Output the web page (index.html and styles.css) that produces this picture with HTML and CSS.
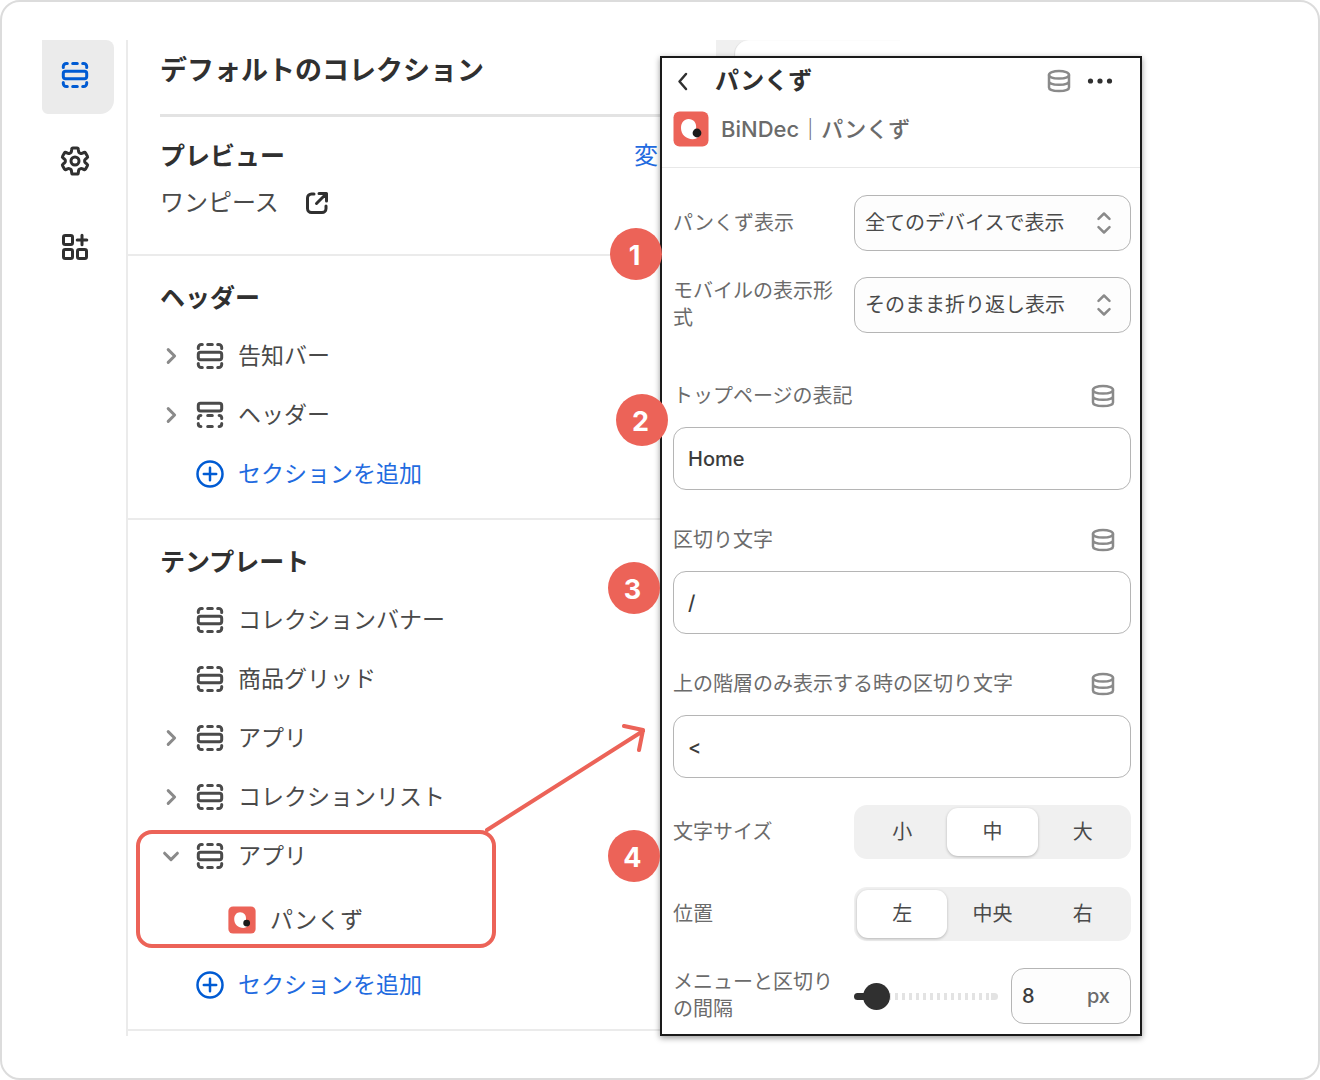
FILE: index.html
```html
<!DOCTYPE html>
<html lang="ja">
<head>
    <meta charset="UTF-8">
    <meta name="viewport" content="width=device-width, initial-scale=1.0">
    <title>パンくず</title>
    <link rel="stylesheet" href="styles.css">
</head>
<body>
    <!-- shared icons -->
    <svg class="sprite" aria-hidden="true">
        <symbol id="icon-section" viewBox="0 0 28 28">
            <rect x="2.3" y="10.2" width="23.4" height="7.6" rx="2.2"/>
            <path d="M2.3 6.6V5.4a3 3 0 0 1 3-3h1M11.7 2.4h4.6M21.700 2.4h1a3 3 0 0 1 3 3v1.2M2.3 21.4v1.2a3 3 0 0 0 3 3h1M11.7 25.6h4.6M21.700 25.6h1a3 3 0 0 0 3-3v-1.2"/>
        </symbol>
        <symbol id="icon-header" viewBox="0 0 28 28">
            <rect x="2.3" y="2.3" width="23.4" height="7.6" rx="2.2"/>
            <path d="M2.3 17.4v-.8a2.6 2.6 0 0 1 2.6-2.2M11.7 14.400h4.6M23.1 14.400a2.6 2.6 0 0 1 2.6 2.2v.8M2.3 22.400v.6a2.6 2.6 0 0 0 2.6 2.6M11.7 25.6h4.6M25.7 22.400v.6a2.6 2.6 0 0 1-2.6 2.6"/>
        </symbol>
        <symbol id="icon-chevron" viewBox="0 0 22 22">
            <path d="M8.2 4.6l6.4 6.4-6.4 6.4"/>
        </symbol>
        <symbol id="icon-add" viewBox="0 0 28 28">
            <circle cx="14" cy="14" r="12.5"/>
            <path d="M14 7.8v12.4M7.8 14h12.4"/>
        </symbol>
        <symbol id="icon-data" viewBox="0 0 24 24">
            <path d="M2 6c0-2.200 4.300-4 10-4s10 1.800 10 4-4.300 3.500-10 3.500S2 8.200 2 6z"/>
            <path d="M2 6v12.500c0 2.200 4.300 3.500 10 3.500s10-1.300 10-3.500V6M2 12.300c0 2.200 4.300 3.500 10 3.500s10-1.300 10-3.500"/>
        </symbol>
        <symbol id="icon-updown" viewBox="0 0 16 24">
            <path d="M2.500 7.800L8 2.500l5.500 5.300M2.500 16.200L8 21.500l5.500-5.300"/>
        </symbol>
        <symbol id="icon-app" viewBox="0 0 36 36">
            <rect x="0.500" y="0.500" width="35" height="35" rx="6" fill="#ec6358"/>
            <path d="M15.500 8c5 0 8.300 3.700 7.600 9.300l1.700 9.200c-1.300 1-3 1.700-5 1.700C13 28.200 8 23.500 8 17c0-5.500 3.200-9 7.500-9z" fill="#fff"/>
            <circle cx="24" cy="22" r="4.400" fill="#1a1a1a"/>
        </symbol>
    </svg>

    <div class="frame">
        <nav class="rail">
            <button class="rail-button active" aria-label="セクション">
                <svg class="icon"><use href="#icon-section"/></svg>
            </button>
            <button class="rail-button" aria-label="設定">
                <svg class="icon gear" viewBox="0 0 30 30">
                    <path d="M13 2h4q1.200 0 1.300 1.200l.3 2.300q.1.900 1 1.400l.6.300q.9.500 1.700.2l2.100-.9q1-.4 1.600.6l1.800 3.100q.6 1-.3 1.700l-1.800 1.400q-.7.500-.7 1.700t.7 1.700l1.800 1.400q.9.700.3 1.700l-1.800 3.100q-.6 1-1.600.6l-2.100-.9q-.8-.3-1.700.2l-.6.300q-.9.500-1 1.400l-.3 2.300q-.1 1.200-1.300 1.200h-4q-1.200 0-1.300-1.200l-.3-2.300q-.1-.9-1-1.400l-.6-.3q-.9-.5-1.700-.2l-2.100.9q-1 .4-1.600-.6l-1.800-3.100q-.6-1 .3-1.700l1.800-1.400q.7-.5.7-1.700t-.7-1.700l-1.800-1.400q-.9-.7-.3-1.700l1.800-3.100q.6-1 1.600-.6l2.100.9q.8.300 1.700-.2l.6-.3q.9-.5 1-1.400l.3-2.300Q11.800 2 13 2z"/>
                    <circle cx="15" cy="15" r="4"/>
                </svg>
            </button>
            <button class="rail-button" aria-label="アプリ">
                <svg class="icon" viewBox="0 0 28 28">
                    <rect x="2.500" y="2.500" width="9" height="9" rx="1.800"/>
                    <rect x="2.500" y="16.500" width="9" height="9" rx="1.800"/>
                    <rect x="16.500" y="16.500" width="9" height="9" rx="1.800"/>
                    <path d="M21 2.200v9.600M16.200 7h9.600"/>
                </svg>
            </button>
        </nav>

        <main class="sidebar">
            <h1>デフォルトのコレクション</h1>

            <section class="preview">
                <div class="preview-head">
                    <h2>プレビュー</h2>
                    <a href="#">変</a>
                </div>
                <div class="preview-item">
                    ワンピース
                    <svg class="icon external" viewBox="0 0 24 24">
                        <path d="M9 3H6.500a4 4 0 0 0-4 4v10.500a4 4 0 0 0 4 4H17a4 4 0 0 0 4-4V15M14 2.500h7.500V10M21 3L11.500 12.500"/>
                    </svg>
                </div>
            </section>

            <section class="group">
                <h2>ヘッダー</h2>
                <ul>
                    <li><svg class="chevron"><use href="#icon-chevron"/></svg><svg class="icon"><use href="#icon-section"/></svg>告知バー</li>
                    <li><svg class="chevron"><use href="#icon-chevron"/></svg><svg class="icon"><use href="#icon-header"/></svg>ヘッダー</li>
                </ul>
                <button class="add"><svg class="icon"><use href="#icon-add"/></svg>セクションを追加</button>
            </section>

            <section class="group">
                <h2>テンプレート</h2>
                <ul>
                    <li><span class="chevron"></span><svg class="icon"><use href="#icon-section"/></svg>コレクションバナー</li>
                    <li><span class="chevron"></span><svg class="icon"><use href="#icon-section"/></svg>商品グリッド</li>
                    <li><svg class="chevron"><use href="#icon-chevron"/></svg><svg class="icon"><use href="#icon-section"/></svg>アプリ</li>
                    <li><svg class="chevron"><use href="#icon-chevron"/></svg><svg class="icon"><use href="#icon-section"/></svg>コレクションリスト</li>
                </ul>
                <div class="highlight">
                    <ul>
                        <li><svg class="chevron open"><use href="#icon-chevron"/></svg><svg class="icon"><use href="#icon-section"/></svg>アプリ</li>
                        <li class="child"><svg class="app-icon"><use href="#icon-app"/></svg>パンくず</li>
                    </ul>
                    <svg class="arrow" viewBox="0 0 160 110">
                        <path d="M2 106L158 7M139 2l19 4-4 20"/>
                    </svg>
                </div>
                <button class="add"><svg class="icon"><use href="#icon-add"/></svg>セクションを追加</button>
            </section>
        </main>

        <div class="stage">
            <div class="canvas"><div class="canvas-page"></div></div>

            <form class="panel">
                <header class="panel-header">
                    <div class="panel-title">
                        <button type="button" class="back" aria-label="戻る">
                            <svg viewBox="0 0 20 20"><path d="M13 3L6.500 10.500 13 18"/></svg>
                        </button>
                        <h2>パンくず</h2>
                        <svg class="data"><use href="#icon-data"/></svg>
                        <button type="button" class="more" aria-label="その他">
                            <svg viewBox="0 0 26 8"><circle cx="3.500" cy="4" r="2.600"/><circle cx="13" cy="4" r="2.600"/><circle cx="22.500" cy="4" r="2.600"/></svg>
                        </button>
                    </div>
                    <div class="panel-app">
                        <svg class="app-icon"><use href="#icon-app"/></svg>
                        BiNDec｜パンくず
                    </div>
                </header>

                <div class="rows">
                    <div class="row">
                        <label for="display">パンくず表示</label>
                        <div class="select">
                            <select id="display"><option>全てのデバイスで表示</option></select>
                            <svg><use href="#icon-updown"/></svg>
                        </div>
                    </div>
                    <div class="row">
                        <label for="mobile">モバイルの表示形式</label>
                        <div class="select">
                            <select id="mobile"><option>そのまま折り返し表示</option></select>
                            <svg><use href="#icon-updown"/></svg>
                        </div>
                    </div>
                </div>

                <div class="fields">
                    <div class="field">
                        <label for="home">トップページの表記</label>
                        <svg class="data"><use href="#icon-data"/></svg>
                        <input type="text" id="home" value="Home">
                    </div>
                    <div class="field">
                        <label for="separator">区切り文字</label>
                        <svg class="data"><use href="#icon-data"/></svg>
                        <input type="text" id="separator" value="/">
                    </div>
                    <div class="field">
                        <label for="parent">上の階層のみ表示する時の区切り文字</label>
                        <svg class="data"><use href="#icon-data"/></svg>
                        <input type="text" id="parent" value="&lt;">
                    </div>
                </div>

                <div class="rows">
                    <div class="row">
                        <span id="size-label">文字サイズ</span>
                        <div class="segments" role="radiogroup" aria-labelledby="size-label">
                            <label><input type="radio" name="size">小</label>
                            <label><input type="radio" name="size" checked>中</label>
                            <label><input type="radio" name="size">大</label>
                        </div>
                    </div>
                    <div class="row">
                        <span id="align-label">位置</span>
                        <div class="segments" role="radiogroup" aria-labelledby="align-label">
                            <label><input type="radio" name="align" checked>左</label>
                            <label><input type="radio" name="align">中央</label>
                            <label><input type="radio" name="align">右</label>
                        </div>
                    </div>
                    <div class="row">
                        <label for="gap">メニューと区切りの間隔</label>
                        <div class="slider">
                            <input type="range" id="gap" min="0" max="100" value="8">
                            <label class="amount"><input type="text" value="8" aria-label="間隔">px</label>
                        </div>
                    </div>
                </div>
            </form>

            <span class="badge badge-1">1</span>
            <span class="badge badge-2">2</span>
            <span class="badge badge-3">3</span>
            <span class="badge badge-4">4</span>
        </div>
    </div>
</body>
</html>
```
FILE: styles.css
```css
*, *::before {
    box-sizing: border-box;
}
body {
    margin: 0;
    font-family: Inter, "Noto Sans CJK JP", sans-serif;
    color: #4a4a4a;
    background: #fff;
}
h1, h2, ul {
    margin: 0;
    padding: 0;
    color: #303030;
}
button, input, select {
    font: inherit;
    color: inherit;
}
button {
    border: none;
    background: none;
    padding: 0;
    cursor: pointer;
}
a {
    color: #1f6be0;
    text-decoration: none;
}
svg {
    display: block;
    flex: none;
    fill: none;
    stroke: currentColor;
    stroke-linecap: round;
    stroke-linejoin: round;
}
.sprite {
    position: absolute;
    width: 0;
    height: 0;
}
.icon {
    width: 28px;
    height: 28px;
    stroke-width: 3;
}
.frame {
    display: grid;
    grid-template-columns: 84px minmax(0, 1fr) 482px;
    min-height: 100vh;
    padding: 38px 176px 42px 40px;
    border: 2px solid #dcdcdc;
    border-radius: 20px;
}

/* icon rail */
.rail {
    display: flex;
    flex-direction: column;
    align-items: flex-start;
    gap: 12px;
    color: #303030;
}
.rail-button {
    display: flex;
    align-items: center;
    justify-content: center;
    width: 72px;
    height: 74px;
    padding: 0 6px 4px 0;
}
.rail-button.active {
    background: #ebebeb;
    color: #005bd3;
    border-radius: 0 8px 14px 6px;
}
.gear {
    width: 30px;
    height: 30px;
}

/* section list */
.sidebar {
    border-left: 2px solid #ebebeb;
    line-height: 28px;
}
h1 {
    margin-left: 32px;
    padding-bottom: 12px;
    border-bottom: 3px solid #e3e3e3;
    font-size: 27px;
    line-height: 62px;
}
.sidebar h2 {
    font-size: 25px;
    line-height: 48px;
}
.preview {
    padding: 15px 0 28px 32px;
    border-bottom: 2px solid #ebebeb;
    font-size: 24px;
}
.preview-head {
    display: flex;
    align-items: center;
    justify-content: space-between;
    padding-right: 2px;
}
.preview-item {
    display: flex;
    align-items: center;
    gap: 26px;
    height: 46px;
}
.external {
    width: 24px;
    height: 24px;
    color: #303030;
}
.group {
    padding: 18px 0 15px 32px;
    border-bottom: 2px solid #ebebeb;
    font-size: 23px;
}
.group h2 {
    margin-bottom: 4px;
}
.group li, .add {
    display: flex;
    align-items: center;
    gap: 14px;
    height: 59px;
    color: #4a4a4a;
}
.chevron {
    width: 22px;
    height: 22px;
    color: #8a8a8a;
    stroke-width: 3;
}
.chevron.open {
    transform: rotate(90deg);
}
.group .child {
    height: 70px;
    padding-left: 68px;
}
.child .app-icon {
    width: 28px;
    height: 28px;
}
.app-icon {
    stroke: none;
}
.group .add {
    padding-left: 36px;
    color: #1f6be0;
}
.add .icon {
    color: #005bd3;
    stroke-width: 2.5;
}
.highlight {
    position: relative;
}
.highlight::before {
    content: "";
    position: absolute;
    top: 4px;
    left: -24px;
    width: 360px;
    height: 118px;
    border: 4px solid #ec6358;
    border-radius: 16px;
}
.arrow {
    position: absolute;
    left: 325px;
    top: -102px;
    width: 160px;
    height: 110px;
    color: #ec6358;
    stroke-width: 4;
}

/* settings panel */
.stage {
    position: relative;
}
.canvas {
    height: 16px;
    margin: 0 242px 0 56px;
    padding-left: 18px;
    background: #f0f0f0;
}
.canvas-page {
    height: 16px;
    border-top-left-radius: 14px;
    background: #fff;
    box-shadow: inset 1px 0 1px #dcdcdc;
}
.panel {
    position: relative;
    border: 2px solid #1a1a1a;
    background: #fff;
    box-shadow: 0 2px 6px rgba(0, 0, 0, 0.4);
    font-size: 20px;
}
.panel-header {
    height: 110px;
    padding: 0 11px;
    border-bottom: 1px solid #e8e8e8;
    color: #6b6b6b;
}
.panel-title {
    display: flex;
    align-items: center;
    height: 46px;
    padding-right: 16px;
    color: #303030;
}
.panel-title h2 {
    flex: 1;
    font-size: 24px;
    line-height: 46px;
}
.back {
    width: 42px;
}
.back svg {
    width: 20px;
    height: 20px;
    stroke-width: 2.5;
}
.more {
    margin-left: 16px;
}
.more svg {
    width: 26px;
    height: 8px;
    fill: currentColor;
    stroke: none;
}
.data {
    width: 24px;
    height: 24px;
    color: #8a8a8a;
    stroke-width: 2.5;
}
.panel-app {
    display: flex;
    align-items: center;
    gap: 12px;
    height: 50px;
    font-size: 22px;
    font-weight: 500;
    line-height: 28px;
}
.panel-app .app-icon {
    width: 36px;
    height: 36px;
}
.rows {
    display: flex;
    flex-direction: column;
    gap: 26px;
    padding: 27px 9px 0 11px;
    color: #6b6b6b;
}
.row {
    display: grid;
    grid-template-columns: 1fr 277px;
    column-gap: 16px;
    align-items: center;
    min-height: 56px;
    line-height: 27px;
}
.select {
    position: relative;
    color: #4a4a4a;
}
.select select {
    appearance: none;
    width: 100%;
    height: 56px;
    padding: 0 48px 0 10px;
    border: 1px solid #b5b5b5;
    border-radius: 13px;
    background: #fdfdfd;
}
.select svg {
    position: absolute;
    top: 16px;
    right: 19px;
    width: 16px;
    height: 24px;
    color: #8a8a8a;
    stroke-width: 2.5;
    pointer-events: none;
}
.fields {
    display: flex;
    flex-direction: column;
    gap: 35px;
    padding: 48px 9px 0 11px;
}
.field {
    display: grid;
    grid-template-columns: 1fr 40px;
    row-gap: 16px;
    align-items: center;
    line-height: 30px;
    color: #6b6b6b;
}
.field input {
    grid-column: 1 / -1;
    width: 100%;
    height: 63px;
    padding: 0 14px;
    border: 1px solid #b5b5b5;
    border-radius: 13px;
    background: #fff;
    color: #3c3c3c;
    font-weight: 500;
}
.segments {
    display: grid;
    grid-template-columns: repeat(3, 1fr);
    height: 54px;
    padding: 3px;
    border-radius: 13px;
    background: #f0f0f0;
    color: #4a4a4a;
}
.segments label {
    display: flex;
    align-items: center;
    justify-content: center;
    border-radius: 11px;
}
.segments label:has(:checked) {
    background: #fff;
    box-shadow: 0 1px 3px rgba(0, 0, 0, 0.25);
}
.segments input {
    appearance: none;
    position: absolute;
    margin: 0;
}
.slider {
    display: flex;
    align-items: center;
    gap: 13px;
}
.slider input[type="range"] {
    appearance: none;
    flex: 1;
    min-width: 0;
    height: 27px;
    margin: 0;
    background: none;
}
.slider input[type="range"]::-webkit-slider-runnable-track {
    height: 7px;
    border-radius: 4px;
    background:
        linear-gradient(#303030, #303030) 0 0 / 23px 7px no-repeat,
        linear-gradient(#e3e3e3, #e3e3e3) 100% 0 / 7px 7px no-repeat,
        linear-gradient(to right, #e3e3e3 3px, transparent 3px) 6px 0 / 7px 7px;
}
.slider input[type="range"]::-webkit-slider-thumb {
    appearance: none;
    width: 27px;
    height: 27px;
    margin-top: -10px;
    border-radius: 50%;
    background: #303030;
}
.amount {
    display: flex;
    align-items: center;
    width: 120px;
    height: 56px;
    padding: 0 20px 0 10px;
    border: 1px solid #b5b5b5;
    border-radius: 13px;
    background: #fdfdfd;
    font-weight: 500;
}
.amount input {
    flex: 1;
    width: 0;
    padding: 0;
    border: none;
    background: none;
    color: #3c3c3c;
}
.rows:last-child {
    padding: 26px 9px 10px 11px;
}

/* numbered callouts on the panel edge */
.badge {
    position: absolute;
    width: 52px;
    height: 52px;
    padding-right: 3px;
    border-radius: 50%;
    background: #ec6358;
    color: #fff;
    font-size: 27px;
    font-weight: 700;
    line-height: 55px;
    text-align: center;
}
.badge-1 {
    top: 188px;
    left: -50px;
}
.badge-2 {
    top: 354px;
    left: -44px;
}
.badge-3 {
    top: 522px;
    left: -52px;
}
.badge-4 {
    top: 790px;
    left: -52px;
}
```
